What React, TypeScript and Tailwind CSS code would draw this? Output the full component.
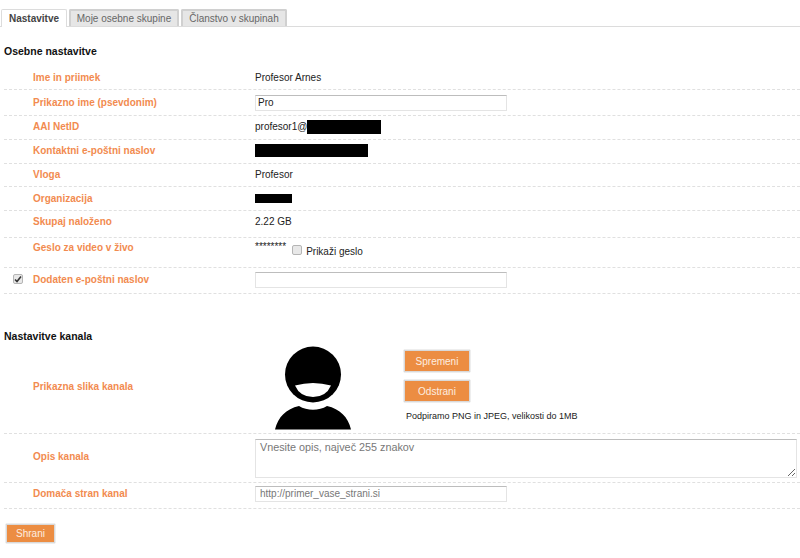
import type { ReactNode } from 'react'

function Row({ label, height, pad = '', check, children }: { label: string; height: string; pad?: string; check?: boolean; children?: ReactNode }) {
  return (
    <div className={`flex items-center border-b border-dashed border-[#e0e0e0] ${height} ${pad}`}>
      <div className="w-[29px] flex justify-center">{check && <Checkbox checked className="-mt-[1px] -ml-[2px]" />}</div>
      <div className="w-[222px] font-bold text-[#f28b50]">{label}</div>
      <div className="flex-1 flex items-center">{children}</div>
    </div>
  )
}

function Checkbox({ checked, className = '' }: { checked?: boolean; className?: string }) {
  return (
    <span className={`w-[10px] h-[10px] flex items-center justify-center rounded-[2px] bg-[#e8e8e8] border border-[#b5b5b5] ${className}`}>
      {checked && (
        <svg width="8" height="8" viewBox="0 0 8 8">
          <path d="M1 4.5 L3 6.5 L7 1.5" fill="none" stroke="#333" strokeWidth="1.6" />
        </svg>
      )}
    </span>
  )
}

function Redacted({ width, height = 'h-[14px]' }: { width: string; height?: string }) {
  return <span className={`inline-block bg-black ${width} ${height}`} />
}

function OrangeButton({ label, size }: { label: string; size: string }) {
  return (
    <button className={`${size} bg-[#ec8d42] text-[#fdeee0] text-[10px] border border-[#d9d9d9] shadow-[0_0_1px_#999]`}>
      {label}
    </button>
  )
}

function Avatar() {
  return (
    <svg width="78" height="84" viewBox="0 0 78 84" className="block">
      <circle cx="38" cy="28.5" r="28" fill="#000" />
      <path d="M20 39.5 Q38 34.5 56 39.5 Q51 51 38 51 Q25 51 20 39.5Z" fill="#fff" />
      <path d="M0 83.5 C3 71 11 63 24 60 C32 65 44 65 52 60 C65 63 73 71 76 83.5Z" fill="#000" />
    </svg>
  )
}

const fieldBorder = 'border border-[#e4e4e4] border-t-[#bdbdbd] outline-none'

export default function App() {
  return (
    <div className="w-[800px] h-[558px] bg-white overflow-hidden font-['Liberation_Sans',Arial,sans-serif] text-[10px] text-[#222]">
      <div className="flex items-end h-[27px] pl-[1px] gap-[2px] border-b border-[#dcdcdc]">
        <div className="w-[66px] h-[18px] -mb-[1px] bg-white border border-b-0 border-[#dcdcdc] rounded-t-[2px] flex items-center justify-center font-bold text-[#444]">Nastavitve</div>
        <div className="w-[110px] h-[17px] bg-[#e6e6e6] border-2 border-b-0 border-[#d0d0d0] rounded-t-[2px] flex items-center justify-center text-[#666]">Moje osebne skupine</div>
        <div className="w-[106px] h-[17px] bg-[#e6e6e6] border-2 border-b-0 border-[#d0d0d0] rounded-t-[2px] flex items-center justify-center text-[#666]">Članstvo v skupinah</div>
      </div>

      <div className="pl-[4px]">
        <h2 className="mt-[17px] h-[21px] font-bold text-[10.5px] text-[#111] leading-[14px]">Osebne nastavitve</h2>
        <Row label="Ime in priimek" height="h-[25px]" pad="pt-[1px]">Profesor Arnes</Row>
        <Row label="Prikazno ime (psevdonim)" height="h-[26px]">
          <input defaultValue="Pro" className={`w-[252px] h-[16px] px-[2px] ${fieldBorder}`} />
        </Row>
        <Row label="AAI NetID" height="h-[24px]" pad="pb-[2px]">
          profesor1@<Redacted width="w-[74px]" />
        </Row>
        <Row label="Kontaktni e-poštni naslov" height="h-[24px]" pad="pb-[2px]"><Redacted width="w-[113px]" height="h-[13px]" /></Row>
        <Row label="Vloga" height="h-[23px]" pad="pb-[1px]">Profesor</Row>
        <Row label="Organizacija" height="h-[24px]"><Redacted width="w-[37px]" height="h-[9px]" /></Row>
        <Row label="Skupaj naloženo" height="h-[27px]" pad="pb-[5px]">2.22 GB</Row>
        <Row label="Geslo za video v živo" height="h-[30px]" pad="pb-[10px]">
          <span className="-mt-[2px]">********</span>
          <Checkbox className="ml-[6px] mr-[4px] mt-[5px]" />
          <span className="mt-[8px]">Prikaži geslo</span>
        </Row>
        <Row label="Dodaten e-poštni naslov" height="h-[26px]" pad="pb-[2px]" check>
          <input className={`w-[252px] h-[16px] px-[2px] mt-[1px] ${fieldBorder}`} />
        </Row>

        <h2 className="mt-[35px] h-[12px] font-bold text-[10.5px] text-[#111] leading-[14px]">Nastavitve kanala</h2>
        <div className="flex border-b border-dashed border-[#e0e0e0] h-[93px]">
          <div className="w-[29px]" />
          <div className="w-[222px] font-bold text-[#f28b50] self-center -mt-[2px]">Prikazna slika kanala</div>
          <div className="flex-1 flex">
            <div className="ml-[20px] mb-[3px] self-end"><Avatar /></div>
            <div className="ml-[51px] pt-[9px] flex flex-col items-start">
              <OrangeButton label="Spremeni" size="w-[66px] h-[22px]" />
              <div className="h-[8px]" />
              <OrangeButton label="Odstrani" size="w-[66px] h-[22px]" />
              <p className="mt-[8px] ml-[2px] text-[9px]">Podpiramo PNG in JPEG, velikosti do 1MB</p>
            </div>
          </div>
        </div>
        <div className="flex items-center border-b border-dashed border-[#e0e0e0] h-[49px]">
          <div className="w-[29px]" />
          <div className="w-[222px] font-bold text-[#f28b50] -mt-[3px]">Opis kanala</div>
          <textarea placeholder="Vnesite opis, največ 255 znakov" className={`w-[542px] h-[39px] px-[4px] py-[1px] text-[10.8px] leading-[12px] placeholder:text-[#777] ${fieldBorder}`} />
        </div>
        <Row label="Domača stran kanal" height="h-[26px]" pad="pb-[4px]">
          <input placeholder="http://primer_vase_strani.si" className={`w-[252px] h-[16px] px-[4px] placeholder:text-[#777] ${fieldBorder}`} />
        </Row>
        <div className="mt-[15px] ml-[2px]">
          <OrangeButton label="Shrani" size="w-[49px] h-[19px]" />
        </div>
      </div>
    </div>
  )
}
